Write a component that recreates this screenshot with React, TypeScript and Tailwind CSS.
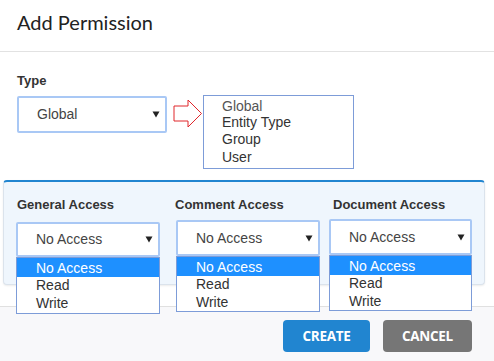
import React from "react";

const Arrow = () => (
  <svg width="8" height="7" viewBox="0 0 8 7" className="shrink-0">
    <polygon points="0.5,0.5 7.5,0.5 4,6.5" fill="#222" />
  </svg>
);

function Select({ text, h, w }: { text: string; h: string; w?: string }) {
  return (
    <div
      className={`${h} ${w ?? "w-full"} bg-white border-2 border-[#a9c8f5] rounded-[2px] flex items-center justify-between pl-[18px] pr-[5px]`}
    >
      <span className="text-[14px] text-[#444]" style={{ fontFamily: '"Liberation Sans", Arial, sans-serif' }}>
        {text}
      </span>
      <Arrow />
    </div>
  );
}

function Menu({ top, h }: { top: string; h: string }) {
  return (
    <div
      className={`absolute left-0 right-0 ${top} ${h} bg-white border border-[#7d9cd8] text-[14px] leading-[17.5px]`}
      style={{ fontFamily: '"Liberation Sans", Arial, sans-serif' }}
    >
      <div className="bg-[#1e90ff] text-white pl-[19px] h-[19px] leading-[20px]">No Access</div>
      <div className="pl-[19px] text-[#333]">Read</div>
      <div className="pl-[19px] text-[#333]">Write</div>
    </div>
  );
}

export default function App() {
  const sans = { fontFamily: '"Liberation Sans", Arial, sans-serif' };
  return (
    <div className="w-[494px] h-[361px] bg-white overflow-hidden flex flex-col" style={sans}>
      {/* Header */}
      <div className="h-[52px] shrink-0 border-b border-[#e2e2e2] pl-[17px] pt-[8px]">
        <div className="text-[20px] leading-[28px] text-[#222]" style={{ fontFamily: "Lato, sans-serif" }}>
          Add Permission
        </div>
      </div>

      {/* Type section */}
      <div className="h-[128px] shrink-0 pl-[17px] pt-[21px]">
        <div className="text-[13px] leading-[16px] font-bold text-[#333]">Type</div>
        <div className="flex items-start mt-[6px]">
          <div className="mt-[1px]">
            <Select text="Global" h="h-[37px]" w="w-[150px]" />
          </div>
          <svg width="30" height="30" viewBox="0 0 30 30" className="ml-[6px] mt-[4px] shrink-0">
            <polygon points="1,7 15,7 15,1 28.5,14.5 15,28 15,22 1,22" fill="none" stroke="#e0262b" strokeWidth="1" />
          </svg>
          <div
            className="w-[151px] h-[74px] border border-[#7d9cd8] pl-[18px] pt-[3px] text-[14px] text-[#333]"
            style={sans}
          >
            <div className="leading-[15px] text-[#555]">Global</div>
            <div className="leading-[17px]">Entity Type</div>
            <div className="leading-[17.5px]">Group</div>
            <div className="leading-[16.5px]">User</div>
          </div>
        </div>
      </div>

      {/* Access panel */}
      <div className="h-[105px] shrink-0 mx-[3px] w-[482px] bg-[#eff6fd] border border-[#dbe3ec] border-t-2 border-t-[#2185d0] rounded-[4px] shadow-[0_1px_2px_rgba(0,0,0,0.08)] flex items-start">
        <div className="ml-[12px] w-[144px] pt-[15px] relative">
          <div className="pl-[1px] text-[13px] leading-[16px] font-bold text-[#333]">General Access</div>
          <div className="mt-[9px] relative">
            <Select text="No Access" h="h-[35px]" />
            <Menu top="top-[35px]" h="h-[57px]" />
          </div>
        </div>
        <div className="ml-[16px] w-[144px] pt-[15px] relative">
          <div className="-ml-[1px] text-[13px] leading-[16px] font-bold text-[#333]">Comment Access</div>
          <div className="mt-[7px] relative">
            <Select text="No Access" h="h-[36px]" />
            <Menu top="top-[36px]" h="h-[56px]" />
          </div>
        </div>
        <div className="ml-[9px] w-[143px] pt-[15px] relative">
          <div className="pl-[4px] text-[13px] leading-[16px] font-bold text-[#333]">Document Access</div>
          <div className="mt-[6px] relative">
            <Select text="No Access" h="h-[36px]" />
            <Menu top="top-[36px]" h="h-[56px]" />
          </div>
        </div>
      </div>

      <div className="h-[21px] shrink-0" />

      {/* Footer */}
      <div className="flex-1 bg-[#f8f8fa] border-t border-[#e0e0e0] flex justify-end items-start pt-[13px] pr-[22px] gap-[13px]">
        <button
          className="w-[87px] h-[32px] rounded-[4px] bg-[#2185d0] text-white text-[13.5px] font-bold tracking-[-0.3px]"
          style={{ fontFamily: '"Open Sans", sans-serif' }}
        >
          CREATE
        </button>
        <button
          className="w-[89px] h-[32px] rounded-[4px] bg-[#767676] text-white text-[13.5px] font-bold tracking-[-0.3px]"
          style={{ fontFamily: '"Open Sans", sans-serif' }}
        >
          CANCEL
        </button>
      </div>
    </div>
  );
}
